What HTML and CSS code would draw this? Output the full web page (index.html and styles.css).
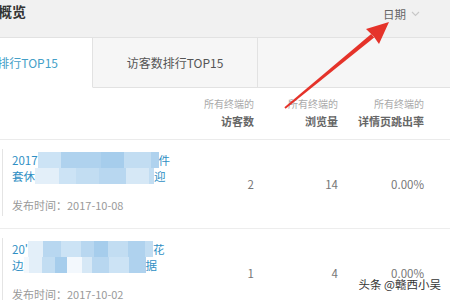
FILE: index.html
```html
<!DOCTYPE html>
<html lang="zh-CN">
<head>
<meta charset="utf-8">
<link rel="stylesheet" href="styles.css">
</head>
<body>
<div class="page">
  <header class="top">
    <h1 class="title">数据概览</h1>
    <div class="date">日期<svg class="chev" width="9" height="6" viewBox="0 0 9 6"><path d="M1 1 L4.5 4.5 L8 1" fill="none" stroke="#c8c8c8" stroke-width="1.1"/></svg></div>
  </header>
  <nav class="tabs">
    <div class="tab active"><span>文章阅读排行TOP15</span></div>
    <div class="tab second">访客数排行TOP15</div>
    <div class="tab rest"></div>
  </nav>
  <div class="thead grid">
    <div></div>
    <div class="th"><span class="sub">所有终端的</span><span class="main">访客数</span></div>
    <div class="th"><span class="sub">所有终端的</span><span class="main">浏览量</span></div>
    <div class="th"><span class="sub">所有终端的</span><span class="main">详情页跳出率</span></div>
  </div>
  <div class="tr grid">
    <div class="art">
      <div class="line">2017<span class="mosaic"><i class="c3 w23"></i><i class="c6 w40"></i><i class="c7 w23"></i><i class="c4 w27"></i><i class="c6 w8"></i></span>件</div>
      <div class="line">套休<span class="mosaic"><i class="c1 w24"></i><i class="c3 w17"></i><i class="c4 w23"></i><i class="c5 w27"></i><i class="c2 w23"></i><i class="c4 w5"></i></span>迎</div>
      <div class="pub">发布时间：2017-10-08</div>
    </div>
    <div class="num">2</div>
    <div class="num">14</div>
    <div class="num">0.00%</div>
  </div>
  <div class="tr grid">
    <div class="art">
      <div class="line">20'<span class="mosaic"><i class="c1 w15"></i><i class="c5 w18"></i><i class="c3 w20"></i><i class="c5 w13"></i><i class="c7 w14"></i><i class="c4 w20"></i><i class="c6 w17"></i><i class="c4 w8"></i></span>花</div>
      <div class="line">边<span class="mosaic"><i class="c0 w5"></i><i class="c1 w13"></i><i class="c4 w13"></i><i class="c7 w12"></i><i class="c0 w15"></i><i class="c2 w10"></i><i class="c5 w17"></i><i class="c3 w20"></i><i class="c6 w17"></i></span>据</div>
      <div class="pub">发布时间：2017-10-02</div>
    </div>
    <div class="num">1</div>
    <div class="num">4</div>
    <div class="num">0.00%</div>
  </div>
  <svg class="arrow" width="450" height="300" viewBox="0 0 450 300">
    <polygon points="284.4,107.2 371.2,34 374.2,37.6 285.6,108.8" fill="#e5332a"/>
    <polygon points="389,22 366,29 373.5,36.2 379,44" fill="#e5332a"/>
  </svg>
  <div class="watermark">头条 @赣西小吴</div>
</div>
</body>
</html>
```
FILE: styles.css
```css
* { box-sizing: border-box; }
body {
  margin: 0;
  width: 450px;
  height: 300px;
  overflow: hidden;
  background: #fff;
  font-family: "Noto Sans CJK SC", "Noto Sans", sans-serif;
}
.page {
  position: relative;
  width: 450px;
  height: 300px;
  overflow: hidden;
}
.top {
  height: 38px;
  background: #f1f1f1;
  border-bottom: 1px solid #e2e2e2;
  display: flex;
  justify-content: space-between;
  align-items: flex-start;
}
.title {
  margin: 1px 0 0 -30px;
  font-size: 14px;
  font-weight: bold;
  line-height: 20px;
  color: #333;
  white-space: nowrap;
}
.date {
  margin: 5px 30px 0 0;
  font-size: 11.5px;
  line-height: 18px;
  color: #666;
  display: flex;
  align-items: center;
  gap: 5px;
}
.tabs {
  display: flex;
  height: 50px;
  background: #f6f6f6;
}
.tab {
  display: flex;
  align-items: center;
  justify-content: center;
  font-size: 12px;
  color: #555;
  border-right: 1px solid #e2e2e2;
  border-bottom: 1px solid #e2e2e2;
  white-space: nowrap;
  overflow: hidden;
}
.tab.active {
  width: 93px;
  background: #fff;
  color: #45a0c8;
  border-bottom-color: #fff;
  justify-content: flex-end;
  padding-right: 34px;
}
.tab.active span { flex-shrink: 0; }
.tab.second { width: 165px; }
.tab.rest { flex: 1; border-right: none; }

.grid {
  display: grid;
  grid-template-columns: 170px 84px 84px 86px;
  padding-right: 26px;
}
.thead {
  height: 52px;
  padding-top: 9px;
  border-bottom: 1px solid #ebebeb;
}
.th {
  display: flex;
  flex-direction: column;
  align-items: flex-end;
}
.th .sub {
  font-size: 10px;
  line-height: 14px;
  color: #aaa;
}
.th .main {
  font-size: 11px;
  line-height: 20px;
  font-weight: bold;
  color: #666;
}
.tr {
  height: 89px;
  border-bottom: 1px solid #ededed;
}
.art {
  margin: 9px 0 12px 2px;
  border-left: 1px solid #e4e4e4;
  padding: 3px 0 0 9px;
  white-space: nowrap;
}
.line {
  font-size: 11.5px;
  line-height: 16px;
  height: 16px;
  color: #2f8fc4;
  display: flex;
  align-items: center;
}
.mosaic {
  display: inline-flex;
  height: 16px;
}
.mosaic i { display: block; height: 16px; }
.c0 { background: #f3f8fd; }
.c1 { background: #e3eff9; }
.c2 { background: #d6e8f6; }
.c3 { background: #cce3f5; }
.c4 { background: #c2ddf2; }
.c5 { background: #b8d7f0; }
.c6 { background: #afd2ee; }
.c7 { background: #a6cdec; }
.w5 { width: 5px; } .w8 { width: 8px; } .w10 { width: 10px; } .w12 { width: 12px; }
.w13 { width: 13px; } .w14 { width: 14px; } .w15 { width: 15px; } .w17 { width: 17px; }
.w18 { width: 18px; } .w20 { width: 20px; } .w23 { width: 23px; } .w24 { width: 24px; }
.w27 { width: 27px; } .w40 { width: 40px; }
.pub {
  margin-top: 13px;
  font-size: 11px;
  line-height: 16px;
  color: #999;
}
.num {
  align-self: center;
  text-align: right;
  font-size: 11.5px;
  color: #777;
}
.arrow {
  position: absolute;
  left: 0;
  top: 0;
  pointer-events: none;
}
.watermark {
  position: absolute;
  right: 9px;
  top: 276px;
  font-size: 11.5px;
  line-height: 16px;
  color: #333;
  text-shadow: 0 0 2px #fff, 0 0 2px #fff, 0 0 3px #fff;
  white-space: nowrap;
}
```
